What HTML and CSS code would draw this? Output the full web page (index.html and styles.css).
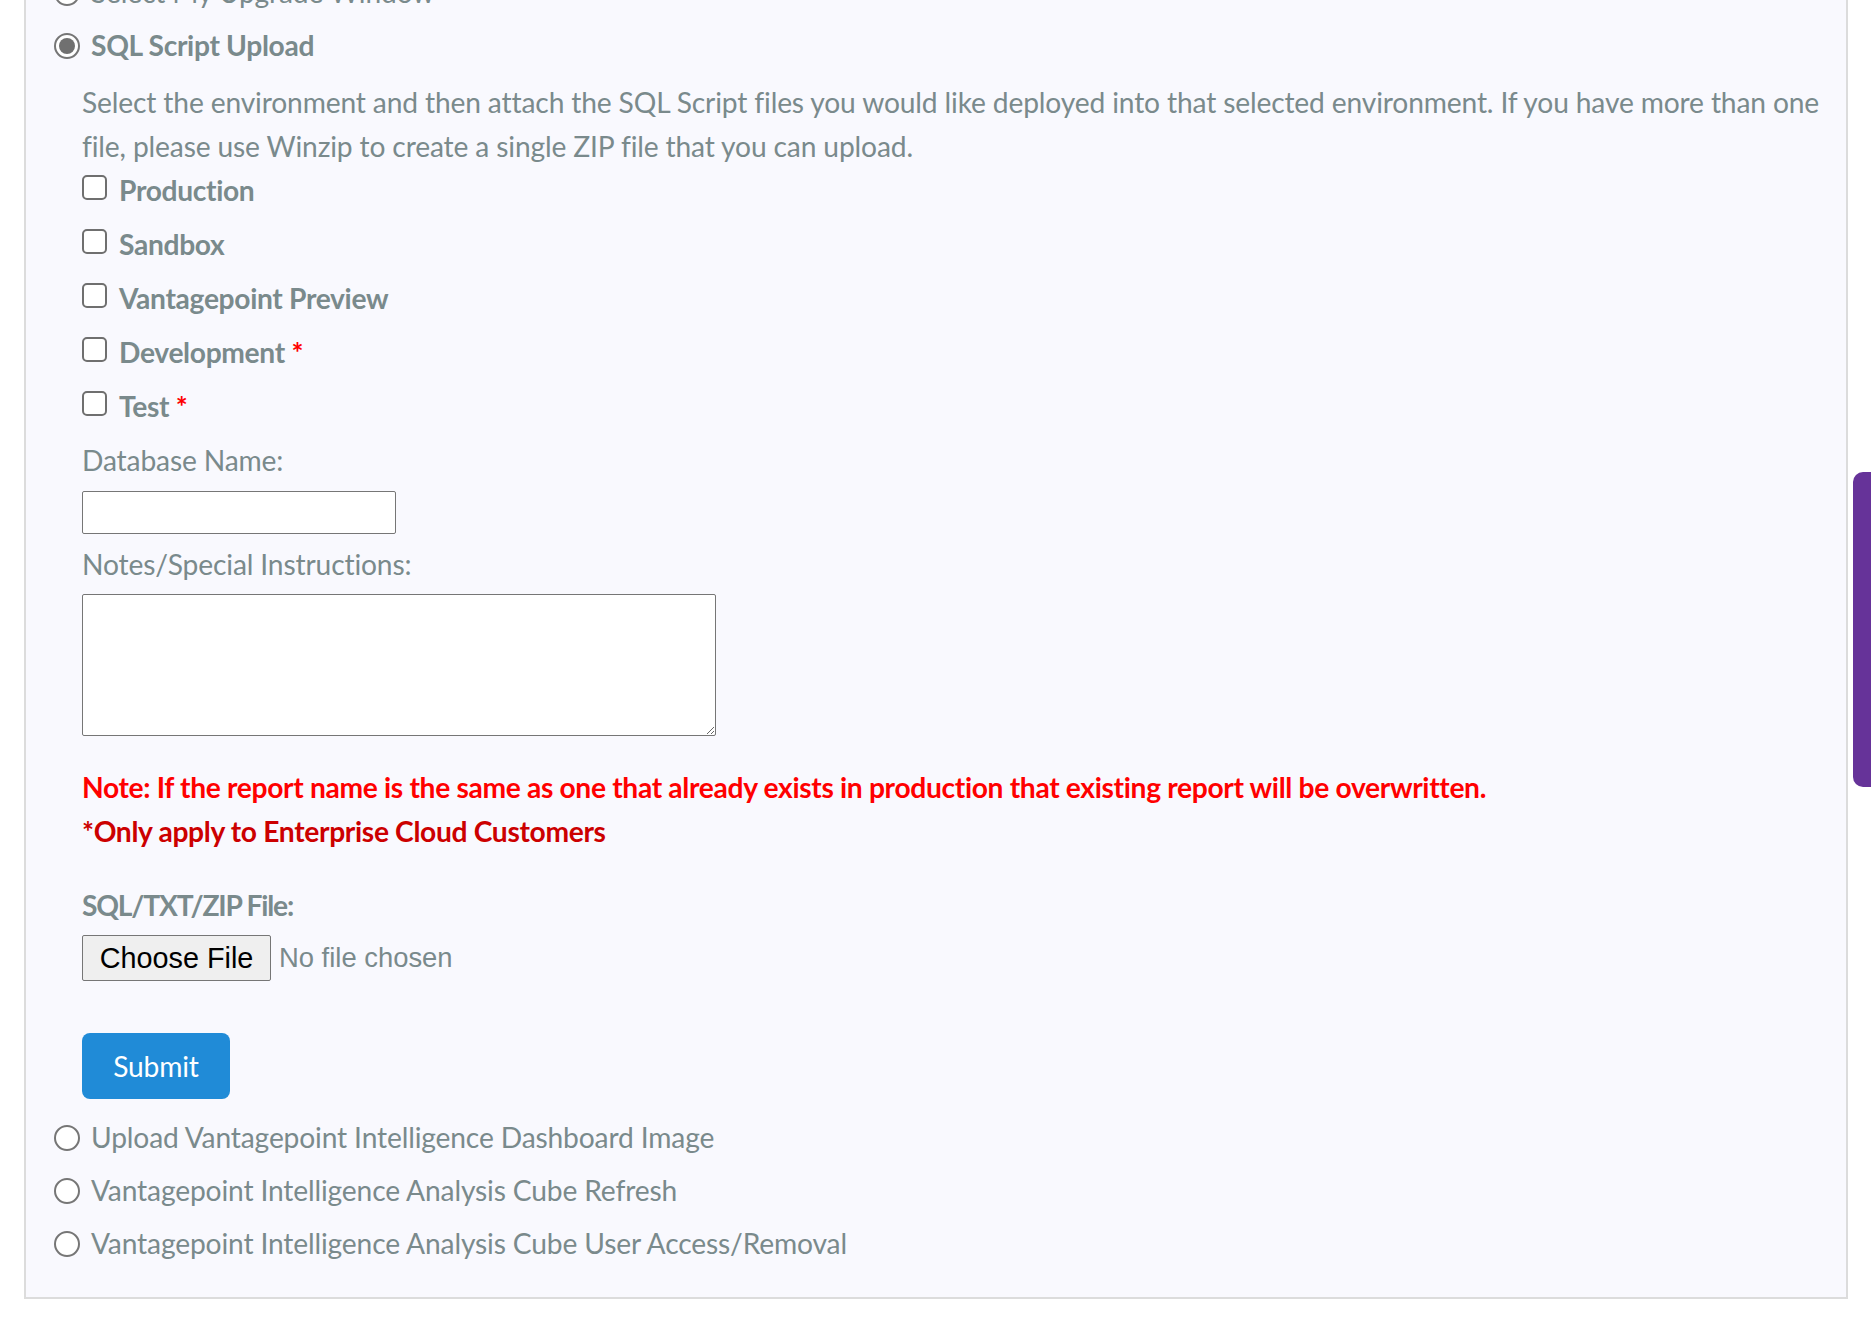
FILE: index.html
```html
<!DOCTYPE html>
<html lang="en">
<head>
<meta charset="utf-8">
<title>SQL Script Upload</title>
<link rel="stylesheet" href="styles.css">
</head>
<body>
<div class="panel">
  <label class="opt"><span class="radio"></span><span class="opt-text">Select My Upgrade Window</span></label>
  <label class="opt"><span class="radio on"></span><span class="opt-text strong">SQL Script Upload</span></label>
  <div class="sub">
    <p class="desc">Select the environment and then attach the SQL Script files you would like deployed into that selected environment. If you have more than one file, please use Winzip to create a single ZIP file that you can upload.</p>
    <div class="checks">
      <label class="check"><span class="box"></span><span>Production</span></label>
      <label class="check"><span class="box"></span><span>Sandbox</span></label>
      <label class="check"><span class="box"></span><span>Vantagepoint Preview</span></label>
      <label class="check"><span class="box"></span><span>Development <span class="req">*</span></span></label>
      <label class="check"><span class="box"></span><span>Test <span class="req">*</span></span></label>
    </div>
    <label class="field-label">Database Name:</label>
    <input class="text-input" type="text">
    <label class="field-label notes-label">Notes/Special Instructions:</label>
    <textarea class="notes"></textarea>
    <div class="notes-block">
      <p class="note">Note: If the report name is the same as one that already exists in production that existing report will be overwritten.</p>
      <p class="note note-dark">*Only apply to Enterprise Cloud Customers</p>
    </div>
    <label class="file-label">SQL/TXT/ZIP File:</label>
    <div class="file-row"><span class="file-btn">Choose File</span><span class="file-none">No file chosen</span></div>
    <button class="submit" type="button">Submit</button>
  </div>
  <div class="more">
    <label class="opt"><span class="radio"></span><span class="opt-text">Upload Vantagepoint Intelligence Dashboard Image</span></label>
    <label class="opt"><span class="radio"></span><span class="opt-text">Vantagepoint Intelligence Analysis Cube Refresh</span></label>
    <label class="opt"><span class="radio"></span><span class="opt-text">Vantagepoint Intelligence Analysis Cube User Access/Removal</span></label>
  </div>
</div>
<div class="side-tab"></div>
</body>
</html>
```
FILE: styles.css
```css
* { box-sizing: border-box; }
html, body { margin: 0; padding: 0; background: #ffffff; }
body {
  font-family: Lato, "Liberation Sans", sans-serif;
  font-size: 28.2px;
  line-height: 44px;
  letter-spacing: -0.15px;
  color: #7a8a8c;
  overflow: hidden;
  height: 1321px;
}
.panel {
  margin: -34px 23px 0 24px;
  border: 2px solid #dcdcdc;
  border-top: 0;
  background: #f9f9fe;
  padding: 0 12px 26px 28px;
}
.opt {
  display: flex;
  align-items: center;
  gap: 11px;
  height: 53px;
}
.opt-text { position: relative; top: -1px; }
.radio {
  width: 26px;
  height: 26px;
  flex: none;
  border: 2px solid #767676;
  border-radius: 50%;
  background: #ffffff;
  display: flex;
  align-items: center;
  justify-content: center;
}
.radio.on::after {
  content: "";
  width: 16px;
  height: 16px;
  border-radius: 50%;
  background: #707070;
}
.strong { font-weight: 700; letter-spacing: -0.33px; }
.sub { margin-left: 28px; }
.desc { margin: 7.5px 0 0; }
.checks { display: flex; flex-direction: column; }
.check {
  display: flex;
  align-items: flex-start;
  gap: 12px;
  margin-bottom: 10px;
  font-weight: 700;
  letter-spacing: -0.33px;
}
.box {
  width: 25px;
  height: 25px;
  flex: none;
  margin-top: 7px;
  border: 2px solid #6f6f6f;
  border-radius: 5px;
  background: #ffffff;
}
.req { color: #ff0000; }
.field-label { display: block; }
.text-input {
  display: block;
  margin-top: 9px;
  width: 314px;
  height: 43px;
  border: 1px solid #767676;
  border-radius: 2px;
  background: #ffffff;
}
.notes-label { margin-top: 8px; }
.notes {
  display: block;
  margin-top: 8px;
  width: 634px;
  height: 142px;
  border: 1px solid #767676;
  border-radius: 2px;
  background: #ffffff;
}
.notes-block { margin-top: 29px; }
.note {
  margin: 0;
  color: #ff0000;
  font-weight: 700;
  letter-spacing: -0.33px;
}
.note-dark { color: #cc0000; }
.file-label { display: block; margin-top: 30px; font-weight: 700; letter-spacing: -1.2px; }
.file-row {
  display: flex;
  align-items: center;
  gap: 8px;
  margin-top: 8px;
  letter-spacing: 0;
}
.file-btn {
  height: 46px;
  width: 189px;
  display: flex;
  align-items: center;
  justify-content: center;
  background: #efefef;
  border: 1px solid #767676;
  border-radius: 2px;
  font-family: "Liberation Sans", Arial, sans-serif;
  font-size: 28.8px;
  color: #000000;
}
.file-none {
  font-family: "Liberation Sans", Arial, sans-serif;
  font-size: 27.4px;
  color: #7a8a8c;
}
.submit {
  display: block;
  margin-top: 52px;
  width: 148px;
  height: 66px;
  border: 0;
  border-radius: 8px;
  background: #208bd7;
  color: #ffffff;
  font-family: Lato, "Liberation Sans", sans-serif;
  font-size: 28.2px;
  letter-spacing: -0.15px;
  padding: 0;
}
.more { margin-top: 13px; }
.side-tab {
  position: fixed;
  top: 472px;
  right: 0;
  width: 18px;
  height: 315px;
  background: #663399;
  border-radius: 10px 0 0 10px;
}
```
